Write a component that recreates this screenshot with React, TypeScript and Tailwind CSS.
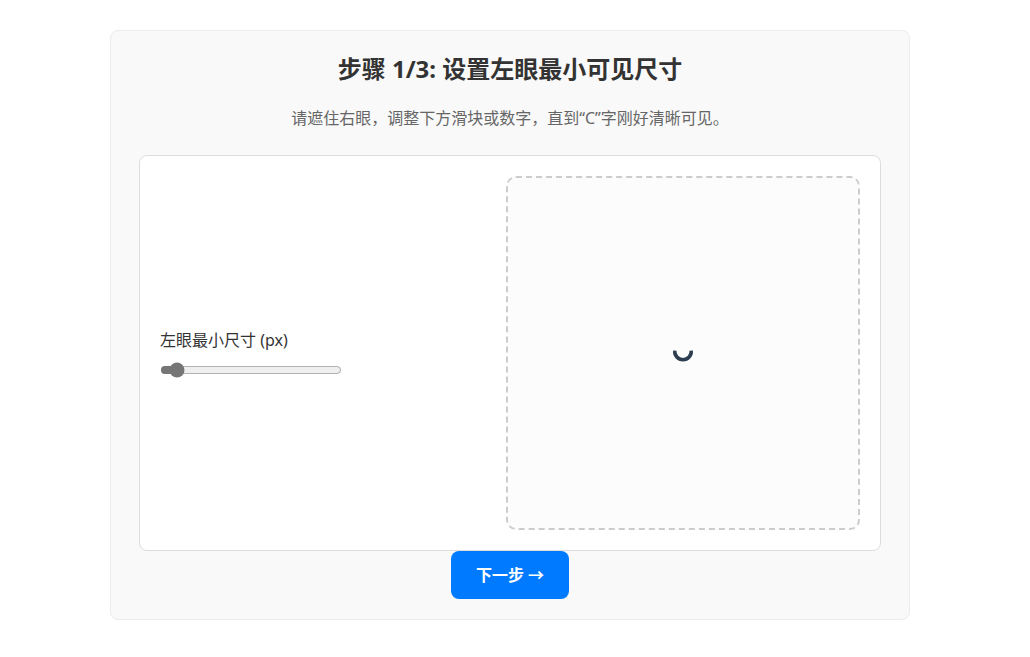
import { useState } from "react";

export default function App() {
  const [size, setSize] = useState(10);

  return (
    <div className="min-h-screen bg-white pt-[30px] pr-[10px] font-['Noto_Sans','Noto_Sans_CJK_SC',sans-serif]">
      <div className="mx-auto w-[800px] rounded-lg border border-[#ececec] bg-[#f9f9f9] px-[28px] pt-[20px] pb-[20px]">
        {/* Header */}
        <h2 className="text-center text-[24px] leading-[36px] font-bold text-[#333]">
          步骤 1/3: 设置左眼最小可见尺寸
        </h2>
        <p className="mt-[19px] text-center text-[16px] leading-[24px] text-[#666]">
          请遮住右眼，调整下方滑块或数字，直到“C”字刚好清晰可见。
        </p>

        {/* Test panel */}
        <div className="mt-[25px] flex rounded-lg border border-[#ddd] bg-white p-[20px]">
          <div className="flex flex-1 flex-col justify-center">
            <label className="text-[16px] leading-[24px] text-[#333]">左眼最小尺寸 (px)</label>
            <input
              type="range"
              min={5}
              max={100}
              value={size}
              onChange={(e) => setSize(Number(e.target.value))}
              className="mt-[10px] w-[182px] accent-[#767676]"
            />
          </div>
          <div className="flex h-[354px] w-[354px] items-center justify-center rounded-[10px] border-2 border-dashed border-[#ccc] bg-[#fcfcfc]">
            {/* optotype, opening up */}
            <svg width="24" height="24" viewBox="0 0 24 24" aria-label="C">
              <path d="M3.8 9.6 A8.25 8.25 0 1 0 20.2 9.6" fill="none" stroke="#2c3e50" strokeWidth="3.5" />
            </svg>
          </div>
        </div>

        {/* Next */}
        <div className="flex justify-center">
          <button className="h-[48px] w-[118px] rounded-lg bg-[#007bff] text-[16px] font-bold text-white">
            下一步 →
          </button>
        </div>
      </div>
    </div>
  );
}
